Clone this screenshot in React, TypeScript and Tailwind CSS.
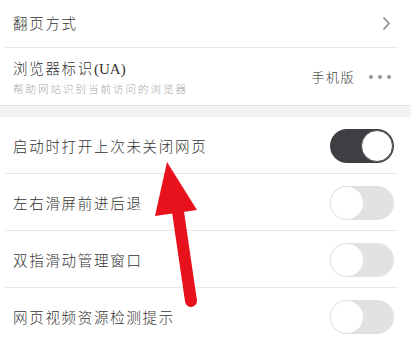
import React from "react";

const font = { fontFamily: '"Noto Sans CJK SC", "Noto Sans", sans-serif' };

function Toggle({ on }: { on: boolean }) {
  return on ? (
    <div className="w-[64px] h-[34px] rounded-full bg-[#3d3f42] flex items-center justify-end p-[1px]">
      <div className="w-[32px] h-[32px] rounded-full bg-white border-[1.5px] border-[#555]" />
    </div>
  ) : (
    <div className="w-[64px] h-[34px] rounded-full bg-[#e2e2e2] flex items-center justify-start">
      <div className="w-[34px] h-[34px] rounded-full bg-white border border-[#e6e6e6] shadow-[0_0_1px_rgba(0,0,0,0.08)]" />
    </div>
  );
}

function ToggleRow({ label, on, last }: { label: string; on: boolean; last?: boolean }) {
  return (
    <div className="relative h-[57px] flex items-center pl-[13px] pr-[17px]">
      <span className="flex-1 text-[14.5px] tracking-[1.7px] font-light text-[#333]">{label}</span>
      <Toggle on={on} />
      {!last && <div className="absolute left-[5px] right-[13px] bottom-0 h-px bg-[#e8e8e8]" />}
    </div>
  );
}

export default function App() {
  return (
    <div className="relative w-[411px] h-[345px] bg-white overflow-hidden" style={font}>
      <div className="relative h-[48px] flex items-center pl-[13px] pr-[20px] pb-[3px]">
        <span className="flex-1 text-[14.5px] tracking-[1.7px] font-light text-[#333]">翻页方式</span>
        <svg width="9" height="15" viewBox="0 0 9 15" className="mt-[1px]">
          <path d="M1.5 1.5 L7 7.5 L1.5 13.5" fill="none" stroke="#8a8a8a" strokeWidth="1.6" />
        </svg>
        <div className="absolute left-[5px] right-[13px] bottom-0 h-px bg-[#e8e8e8]" />
      </div>
      <div className="h-[57px] flex items-center pl-[13px] pr-[20px]">
        <div className="flex-1 flex flex-col gap-[2px] pt-[1px]">
          <span className="text-[14.5px] tracking-[1.7px] font-light text-[#333] leading-[20px]">
            浏览器标识<span style={{ fontFamily: '"Liberation Serif", serif' }} className="tracking-normal font-normal text-[15px]">(UA)</span>
          </span>
          <span className="text-[10.5px] tracking-[2px] font-light text-[#a8a8a8] leading-[16px]">帮助网站识别当前访问的浏览器</span>
        </div>
        <span className="text-[13px] tracking-[1.5px] font-light text-[#444] mr-[14px]">手机版</span>
        <div className="flex gap-[5px] items-center">
          <div className="w-[4px] h-[4px] rounded-full bg-[#999]" />
          <div className="w-[4px] h-[4px] rounded-full bg-[#999]" />
          <div className="w-[4px] h-[4px] rounded-full bg-[#999]" />
        </div>
      </div>
      <div className="h-[12px] bg-[#f3f3f3] border-t border-[#e2e2e2]" />
      <ToggleRow label="启动时打开上次未关闭网页" on />
      <ToggleRow label="左右滑屏前进后退" on={false} />
      <ToggleRow label="双指滑动管理窗口" on={false} />
      <ToggleRow label="网页视频资源检测提示" on={false} last />
      <svg className="absolute left-0 top-0 pointer-events-none" width="411" height="345" viewBox="0 0 411 345">
        <line x1="177" y1="205" x2="191" y2="301" stroke="#e8121c" strokeWidth="12" strokeLinecap="round" />
        <polygon points="167,162 155,216 197,210" fill="#e8121c" />
      </svg>
    </div>
  );
}
